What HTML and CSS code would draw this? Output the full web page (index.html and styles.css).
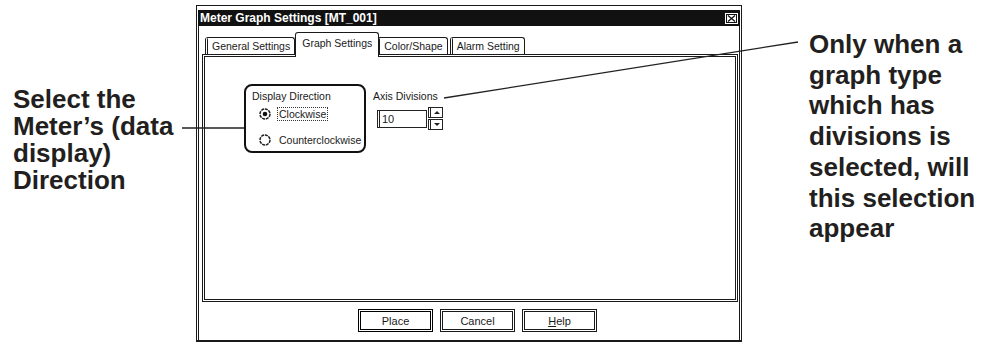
FILE: index.html
```html
<!DOCTYPE html>
<html lang="en">
<head>
  <meta charset="UTF-8">
  <title>Meter Graph Settings</title>
  <link rel="stylesheet" href="styles.css">
</head>
<body>

<div class="page">
  <div class="note note-left">Select the<br>Meter’s (data<br>display)<br>Direction</div>

  <div class="dialog">
    <div class="titlebar">
      <span>Meter Graph Settings [MT_001]</span>
      <span class="close">
        <svg width="15" height="13" viewBox="0 0 15 13">
          <rect x="0.5" y="0.5" width="14" height="12" fill="#fff" stroke="#111"/>
          <rect x="2.5" y="2.5" width="10" height="8" fill="none" stroke="#111"/>
          <path d="M4 3.5 L11 9.5 M11 3.5 L4 9.5" stroke="#111" stroke-width="1.3"/>
        </svg>
      </span>
    </div>

    <div class="frame">
      <div class="tabs">
        <div class="tab">General Settings</div>
        <div class="tab active">Graph Settings</div>
        <div class="tab">Color/Shape</div>
        <div class="tab">Alarm Setting</div>
      </div>

      <div class="panel">
        <div class="group">
          <div class="group-title">Display Direction</div>
          <div class="radio-row">
            <svg class="radio" width="12" height="12" viewBox="0 0 12 12">
              <circle cx="6" cy="6" r="5" fill="#fff" stroke="#222" stroke-width="1.5" stroke-dasharray="3 0.8"/>
              <circle cx="6" cy="6" r="2.3" fill="#111"/>
            </svg>
            <span class="focus">Clockwise</span>
          </div>
          <div class="radio-row second">
            <svg class="radio" width="12" height="12" viewBox="0 0 12 12">
              <circle cx="6" cy="6" r="5" fill="#fff" stroke="#222" stroke-width="1.5" stroke-dasharray="3 0.8"/>
            </svg>
            <span class="label">Counterclockwise</span>
          </div>
        </div>

        <div class="axis">
          <div class="axis-label">Axis Divisions</div>
          <div class="spin-row">
            <div class="num">10</div>
            <div class="spin">
              <span class="arrow up"></span>
              <span class="arrow down"></span>
            </div>
          </div>
        </div>
      </div>

      <div class="buttons">
        <button class="btn default">Place</button>
        <button class="btn">Cancel</button>
        <button class="btn"><u>H</u>elp</button>
      </div>
    </div>
  </div>

  <div class="note note-right">Only when a<br>graph type<br>which has<br>divisions is<br>selected, will<br>this selection<br>appear</div>

  <!-- leader lines from the notes to the dialog -->
  <svg class="leaders" width="985" height="344">
    <line x1="182" y1="128" x2="244" y2="128" stroke="#222" stroke-width="1.3"/>
    <line x1="444" y1="98" x2="798" y2="42" stroke="#222" stroke-width="1.3"/>
  </svg>
</div>

</body>
</html>
```

FILE: styles.css
```css
body {
  margin: 0;
  background: white;
  font-family: "Liberation Sans", Arial, sans-serif;
  color: #1a1a1a;
}
.page {
  position: relative;
  width: 985px;
  height: 344px;
  display: flex;
  align-items: flex-start;
  overflow: hidden;
}
.note {
  font-weight: bold;
  font-size: 26px;
  color: #231f20;
  white-space: nowrap;
}
.note-left {
  width: 183px;
  padding: 86px 0 0 13px;
  line-height: 27px;
}
.note-right {
  margin-left: 67px;
  padding-top: 29px;
  line-height: 30.7px;
}
.leaders {
  position: absolute;
  left: 0;
  top: 0;
  pointer-events: none;
}

/* dialog window */
.dialog {
  margin-top: 5px;
  width: 546px;
  height: 337px;
  box-sizing: border-box;
  border: 1px solid #1a1a1a;
  border-bottom: 2px solid #1a1a1a;
  padding: 4px 1px 0 1px;
  display: flex;
  flex-direction: column;
}
.titlebar {
  height: 16px;
  background: #111;
  color: white;
  font-weight: bold;
  font-size: 12px;
  display: flex;
  align-items: center;
  justify-content: space-between;
  padding: 0 1px 0 2px;
}
.close {
  display: flex;
}
.frame {
  flex: 1;
  border-left: 1px solid #1a1a1a;
  border-right: 1px solid #1a1a1a;
  padding: 6px 1px 0 3px;
  display: flex;
  flex-direction: column;
}

/* tabs */
.tabs {
  height: 22px;
  display: flex;
  align-items: flex-end;
  padding-left: 3px;
}
.tab {
  height: 17px;
  box-sizing: border-box;
  border: 1px solid #1a1a1a;
  border-left: 3px double #1a1a1a;
  border-bottom: none;
  border-radius: 3px 3px 0 0;
  padding: 2px 4px 0 4px;
  font-size: 10.5px;
  line-height: 13px;
  background: white;
  white-space: nowrap;
}
.tab + .tab {
  margin-left: 2px;
}
.tab.active {
  height: 25px;
  margin: 0 -2px -3px 0;
  padding: 4px 6px 0 6px;
  border-left: 1px solid #1a1a1a;
  position: relative;
  z-index: 1;
}
.tab.active + .tab {
  margin-left: 0;
}

/* tab page */
.panel {
  height: 248px;
  box-sizing: border-box;
  border: 3px double #1a1a1a;
  padding: 27px 0 0 39px;
  display: flex;
  align-items: flex-start;
  font-size: 10.5px;
}
.group {
  width: 122px;
  height: 69px;
  box-sizing: border-box;
  border: 2px solid #111;
  border-radius: 8px;
  padding: 4px 0 0 6px;
}
.group-title {
  line-height: 13px;
}
.radio-row {
  display: flex;
  align-items: center;
  height: 14px;
  margin-top: 4px;
  padding-left: 7px;
}
.radio-row.second {
  margin-top: 12px;
}
.radio {
  flex: none;
}
.focus {
  margin-left: 6px;
  padding: 0 1px;
  border: 1px dotted #333;
  line-height: 12px;
}
.label {
  margin-left: 8px;
}

.axis {
  margin-left: 7px;
}
.axis-label {
  margin-top: 6px;
  line-height: 13px;
}
.spin-row {
  display: flex;
  align-items: center;
  margin: 4px 0 0 4px;
}
.num {
  width: 50px;
  height: 18px;
  box-sizing: border-box;
  border: 1px solid #222;
  border-left: 3px double #222;
  padding-left: 2px;
  line-height: 16px;
  font-size: 11px;
}
.spin {
  margin-left: 1px;
  width: 15px;
  display: flex;
  flex-direction: column;
  gap: 1px;
}
.arrow {
  height: 11px;
  box-sizing: border-box;
  border: 1px solid #222;
  border-left: 3px double #222;
  display: flex;
  align-items: center;
  justify-content: center;
}
.arrow::after {
  content: "";
  border-left: 3px solid transparent;
  border-right: 3px solid transparent;
}
.arrow.up::after {
  border-bottom: 3px solid #222;
}
.arrow.down::after {
  border-top: 3px solid #222;
}

/* bottom buttons */
.buttons {
  margin-top: 7px;
  padding-left: 156px;
  display: flex;
  gap: 7px;
}
.btn {
  width: 75px;
  height: 23px;
  box-sizing: border-box;
  border: 3px double #1a1a1a;
  background: white;
  font-family: "Liberation Sans", Arial, sans-serif;
  font-size: 11px;
  color: #1a1a1a;
  padding: 0;
}
.btn.default {
  border: 3px double #000;
  outline: 1px solid #000;
  outline-offset: -1px;
}
```
